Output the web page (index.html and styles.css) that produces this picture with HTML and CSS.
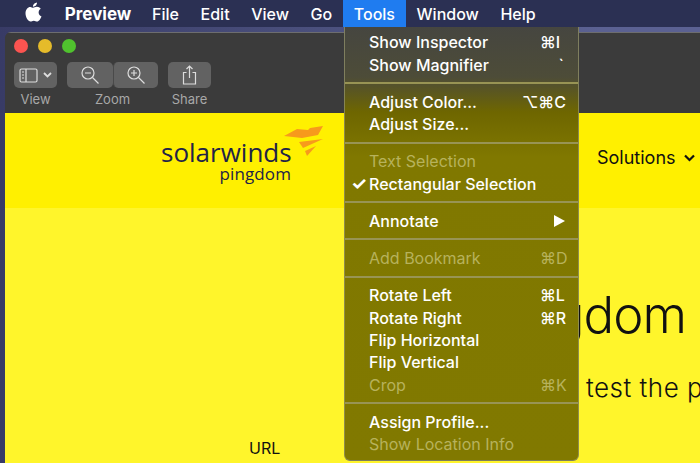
FILE: index.html
```html
<!DOCTYPE html>
<html lang="en">
<head>
    <meta charset="UTF-8">
    <title>Preview - Tools menu</title>
    <link rel="stylesheet" href="styles.css">
</head>
<body>
    <nav class="menubar">
        <svg class="apple" width="17" height="20" viewBox="0 0 17 20">
            <path fill="#fff" d="M12 0.5c.2 2.2-2 4.4-4 4.200-.3-2 1.900-4.100 4-4.200zM8.100 5.700c1 0 2-1 3.800-1 1.500 0 3 .8 3.900 2.100-3.200 1.900-2.700 6.300.7 7.600-.9 2.200-2.600 5.100-4.400 5.100-1.300 0-1.700-.8-3.300-.8s-2.100.8-3.300.8C3.300 19.500.5 15.200.5 11.200c0-3.700 2.400-6.300 4.800-6.300 1.200 0 2 .8 2.800.8z"/>
        </svg>
        <span class="menubar-item app-name">Preview</span>
        <span class="menubar-item">File</span>
        <span class="menubar-item">Edit</span>
        <span class="menubar-item">View</span>
        <span class="menubar-item">Go</span>
        <span class="menubar-item active">Tools</span>
        <span class="menubar-item">Window</span>
        <span class="menubar-item">Help</span>
    </nav>

    <div class="desktop">
        <div class="window">
            <div class="titlebar">
                <div class="lights">
                    <span class="light red"></span>
                    <span class="light yellow"></span>
                    <span class="light green"></span>
                </div>
                <div class="toolbar">
                    <div class="tool tool-view">
                        <div class="btn btn-view">
                            <svg width="19" height="15" viewBox="0 0 19 15" fill="none" stroke="#ddd" stroke-width="1.200">
                                <rect x="1" y="1" width="17" height="13" rx="1.500"/>
                                <path d="M7 1v13M3 4h2M3 7h2M3 10h2"/>
                            </svg>
                            <svg width="9" height="6" viewBox="0 0 9 6" fill="none" stroke="#ddd" stroke-width="1.800">
                                <path d="M1 1l3.500 3.500L8 1"/>
                            </svg>
                        </div>
                        <span class="tool-label">View</span>
                    </div>
                    <div class="tool tool-zoom">
                        <div class="btn-pair">
                            <div class="btn btn-zoom">
                                <svg width="20" height="20" viewBox="0 0 20 20" fill="none" stroke="#ddd" stroke-width="1.200">
                                    <circle cx="8" cy="8" r="6"/>
                                    <path d="M12.500 12.500l6 6M5 8h6"/>
                                </svg>
                            </div>
                            <div class="btn btn-zoom">
                                <svg width="20" height="20" viewBox="0 0 20 20" fill="none" stroke="#ddd" stroke-width="1.200">
                                    <circle cx="8" cy="8" r="6"/>
                                    <path d="M12.500 12.500l6 6M5 8h6M8 5v6"/>
                                </svg>
                            </div>
                        </div>
                        <span class="tool-label">Zoom</span>
                    </div>
                    <div class="tool tool-share">
                        <div class="btn btn-share">
                            <svg width="15" height="20" viewBox="0 0 15 20" fill="none" stroke="#ddd" stroke-width="1.200">
                                <path d="M4.500 7.500H1.500v11.500h12V7.500h-3M7.500 13V1M4.500 4l3-3 3 3"/>
                            </svg>
                        </div>
                        <span class="tool-label">Share</span>
                    </div>
                </div>
            </div>

            <div class="page">
                <header class="site-header">
                    <div class="logo">
                        <div class="logo-main">solarwinds</div>
                        <div class="logo-sub">pingdom</div>
                        <svg class="logo-flame" width="40" height="33" viewBox="0 0 40 33">
                            <path fill="#f79a1c" d="M0 10L13 3 24 4 26 2 39 0 34 9 18 12z"/>
                            <path fill="#f79a1c" d="M15 16L39 13 19 22z"/>
                            <path fill="#f79a1c" d="M21 25L32 20 23 30z"/>
                        </svg>
                    </div>
                    <div class="nav-solutions">
                        <span>Solutions</span>
                        <svg width="11" height="8" viewBox="0 0 11 8" fill="none" stroke="#111" stroke-width="2.200">
                            <path d="M1 1.500l4.500 4.500L10 1.500"/>
                        </svg>
                    </div>
                </header>
                <section class="hero">
                    <h1 class="hero-title">Pingdom</h1>
                    <p class="hero-sub">test the page</p>
                    <div class="url-label">URL</div>
                </section>
            </div>
        </div>
    </div>

    <div class="menu">
        <div class="menu-row"><span class="menu-text">Show Inspector</span><span class="shortcut">⌘I</span></div>
        <div class="menu-row"><span class="menu-text">Show Magnifier</span><span class="shortcut shortcut-end">`</span></div>
        <div class="menu-sep"></div>
        <div class="menu-row"><span class="menu-text">Adjust Color...</span><span class="shortcut shortcut-wide">⌥⌘C</span></div>
        <div class="menu-row"><span class="menu-text">Adjust Size...</span></div>
        <div class="menu-sep"></div>
        <div class="menu-row disabled"><span class="menu-text">Text Selection</span></div>
        <div class="menu-row"><span class="check">✓</span><span class="menu-text">Rectangular Selection</span></div>
        <div class="menu-sep"></div>
        <div class="menu-row"><span class="menu-text">Annotate</span><span class="submenu-arrow"></span></div>
        <div class="menu-sep"></div>
        <div class="menu-row disabled"><span class="menu-text">Add Bookmark</span><span class="shortcut">⌘D</span></div>
        <div class="menu-sep"></div>
        <div class="menu-row"><span class="menu-text">Rotate Left</span><span class="shortcut">⌘L</span></div>
        <div class="menu-row"><span class="menu-text">Rotate Right</span><span class="shortcut">⌘R</span></div>
        <div class="menu-row"><span class="menu-text">Flip Horizontal</span></div>
        <div class="menu-row"><span class="menu-text">Flip Vertical</span></div>
        <div class="menu-row disabled"><span class="menu-text">Crop</span><span class="shortcut">⌘K</span></div>
        <div class="menu-sep"></div>
        <div class="menu-row"><span class="menu-text">Assign Profile...</span></div>
        <div class="menu-row disabled"><span class="menu-text">Show Location Info</span></div>
    </div>
</body>
</html>
```

FILE: styles.css
```css
html, body {
    margin: 0;
    height: 100%;
    overflow: hidden;
}

body {
    position: relative;
    display: flex;
    flex-direction: column;
    width: 700px;
    height: 463px;
    font-family: "Inter", "Liberation Sans", sans-serif;
    background: linear-gradient(to right, #383b66 0, #4a4f7c 300px, #5b6192 600px);
}

/* menu bar */
.menubar {
    display: flex;
    align-items: center;
    flex: none;
    height: 27px;
    padding-left: 25px;
    background-color: #2b3053;
    color: #fff;
    font-size: 16px;
    font-weight: 500;
}

.apple {
    margin-right: 12px;
    margin-top: -3px;
}

.menubar-item {
    display: flex;
    align-items: center;
    height: 27px;
    padding: 0 10.800px;
}

.app-name {
    font-size: 17px;
    font-weight: 700;
    padding-right: 10px;
}

.menubar-item.active {
    background-color: #1f7cf0;
}

/* window */
.desktop {
    flex: 1;
    padding: 5px 0 0 5px;
    min-height: 0;
}

.window {
    display: flex;
    flex-direction: column;
    height: 100%;
    border-radius: 6px 0 0 0;
    overflow: hidden;
}

.titlebar {
    flex: none;
    height: 81px;
    box-sizing: border-box;
    padding: 6px 9px 0;
    background-color: #3b3b3b;
    border-top: 1px solid #6d6d6f;
}

.lights {
    display: flex;
    gap: 10px;
    margin-bottom: 9px;
}

.light {
    width: 14px;
    height: 14px;
    border-radius: 50%;
}

.red { background-color: #fb5450; }
.yellow { background-color: #e5bb2a; }
.green { background-color: #50c22e; }

.toolbar {
    display: flex;
}

.tool {
    display: flex;
    flex-direction: column;
    align-items: center;
    gap: 4px;
}

.tool-zoom { margin-left: 10px; }
.tool-share { margin-left: 10px; }

.tool-label {
    font-size: 13px;
    line-height: 14px;
    color: #a8a8a8;
}

.btn-pair {
    display: flex;
}

.btn {
    display: flex;
    align-items: center;
    justify-content: center;
    height: 26px;
    border-radius: 5px;
    background-color: #626262;
}

.btn-view { width: 43px; gap: 5px; }
.btn-zoom { width: 46px; }
.btn-zoom + .btn-zoom { border-left: 1px solid #4a4a4a; width: 44px; }
.btn-share { width: 43px; }

/* page behind the menu */
.page {
    flex: 1;
    min-height: 0;
    background-color: #fff52b;
    color: #111;
}

.site-header {
    position: relative;
    height: 95px;
    background-color: #fff000;
}

.logo {
    position: absolute;
    left: 156px;
    top: 24px;
    width: 135px;
    color: #222347;
}

.logo-main {
    font-family: "Open Sans", sans-serif;
    font-size: 26px;
    line-height: 30px;
}

.logo-sub {
    font-family: "Open Sans", sans-serif;
    font-size: 17px;
    line-height: 17px;
    margin-top: -2px;
    text-align: right;
    padding-right: 5px;
    letter-spacing: 0.1px;
}

.logo-flame {
    position: absolute;
    left: 123px;
    top: -11px;
}

.nav-solutions {
    position: absolute;
    left: 592px;
    top: 33px;
    display: flex;
    align-items: center;
    gap: 8px;
    font-size: 18px;
    line-height: 24px;
}

.hero {
    position: relative;
    height: 260px;
}

.hero-title {
    position: absolute;
    right: 14px;
    top: 79px;
    margin: 0;
    font-size: 51px;
    font-weight: 300;
    line-height: 56px;
    letter-spacing: -1px;
    white-space: nowrap;
}

.hero-sub {
    position: absolute;
    left: 581px;
    top: 166px;
    margin: 0;
    font-size: 26px;
    font-weight: 300;
    line-height: 28px;
    letter-spacing: 0.5px;
    white-space: nowrap;
}

.url-label {
    position: absolute;
    left: 244px;
    top: 230px;
    font-size: 16px;
    line-height: 20px;
}

/* tools menu, floats over everything */
.menu {
    position: absolute;
    left: 344px;
    top: 27px;
    width: 235px;
    height: 434px;
    box-sizing: border-box;
    padding: 4px 0;
    border: 1px solid rgba(150, 150, 110, 0.7);
    border-top: none;
    border-radius: 0 0 6px 6px;
    background: linear-gradient(to bottom, #464640 0, #4d4c38 50px, #6e6600 85px, #807800 130px, #817900 100%);
    color: #fff;
    font-size: 16px;
    font-weight: 500;
}

.menu-row {
    position: relative;
    display: flex;
    align-items: center;
    justify-content: space-between;
    height: 22.400px;
    padding: 0 10px 0 24px;
    white-space: nowrap;
}

.menu-row.disabled {
    color: #b7b25c;
    font-weight: 400;
}

.menu-sep {
    height: 2px;
    margin: 6.400px 0;
    background-color: #989454;
}

.check {
    position: absolute;
    left: 6px;
    font-size: 18px;
    font-weight: 700;
}

.shortcut {
    width: 28px;
    font-size: 16px;
    text-align: left;
}

.shortcut-wide {
    width: 46px;
}

.shortcut-end {
    padding-right: 4px;
    width: 24px;
    text-align: right;
}

.submenu-arrow {
    width: 0;
    height: 0;
    margin-right: 3px;
    border-left: 11px solid #fff;
    border-top: 6px solid transparent;
    border-bottom: 6px solid transparent;
}
```
